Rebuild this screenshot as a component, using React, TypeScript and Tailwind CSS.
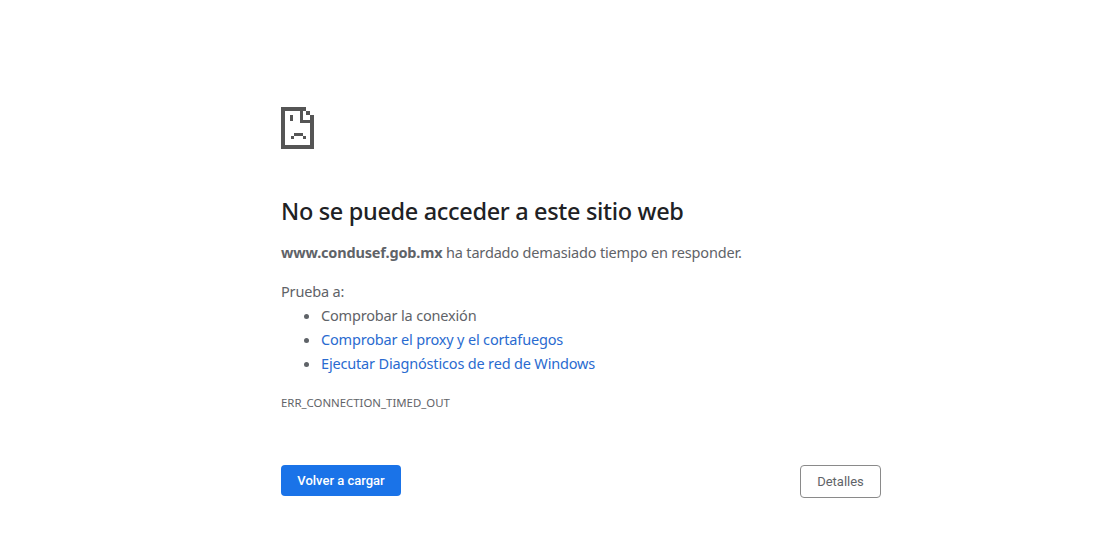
function SadPage() {
  return (
    <svg width="33" height="42" viewBox="0 0 33 42" className="block" shapeRendering="crispEdges" fill="#555555">
      {/* page outline */}
      <rect x="0" y="0" width="25" height="4" />
      <rect x="0" y="0" width="4" height="42" />
      <rect x="0" y="38" width="33" height="4" />
      <rect x="29" y="8" width="4" height="34" />
      {/* folded corner */}
      <rect x="25" y="4" width="4" height="4" />
      <rect x="19" y="0" width="3" height="16" />
      <rect x="19" y="13" width="14" height="3" />
      {/* face */}
      <rect x="9" y="8" width="3" height="6" />
      <rect x="10" y="29" width="3" height="3" />
      <rect x="13" y="26" width="9" height="3" />
      <rect x="22" y="29" width="3" height="3" />
    </svg>
  );
}

export default function App() {
  return (
    <div className="min-h-[545px] bg-white font-['Noto_Sans','Open_Sans',sans-serif] text-[14.5px] leading-[24px] tracking-[-0.17px] text-[#5f6368]">
      <div className="ml-[281px] w-[600px] pt-[107px]">
        <SadPage />
        <h1 className="mt-[47px] text-[23.5px] leading-[30px] font-medium tracking-[-0.33px] text-[#202124]">
          No se puede acceder a este sitio web
        </h1>
        <p className="mt-[14px]">
          <strong className="font-bold">www.condusef.gob.mx</strong> ha tardado demasiado tiempo en responder.
        </p>
        <p className="mt-[15px]">Prueba a:</p>
        <ul className="list-disc pl-10">
          <li>Comprobar la conexión</li>
          <li className="text-[#2a6bd0] marker:text-[#5f6368]">Comprobar el proxy y el cortafuegos</li>
          <li className="text-[#2a6bd0] marker:text-[#5f6368]">Ejecutar Diagnósticos de red de Windows</li>
        </ul>
        <div className="mt-[20px] text-[11.4px] leading-[16px] tracking-normal">ERR_CONNECTION_TIMED_OUT</div>
        <div className="mt-[54px] flex items-start justify-between font-['Roboto',sans-serif] tracking-normal">
          <button className="h-[31px] w-[120px] rounded-[4px] bg-[#1a73e8] text-[13px] font-medium text-white">
            Volver a cargar
          </button>
          <button className="h-[33px] w-[81px] rounded-[4px] border border-[#8a8a8a] bg-white text-[13px] text-[#5f6368]">
            Detalles
          </button>
        </div>
      </div>
    </div>
  );
}
